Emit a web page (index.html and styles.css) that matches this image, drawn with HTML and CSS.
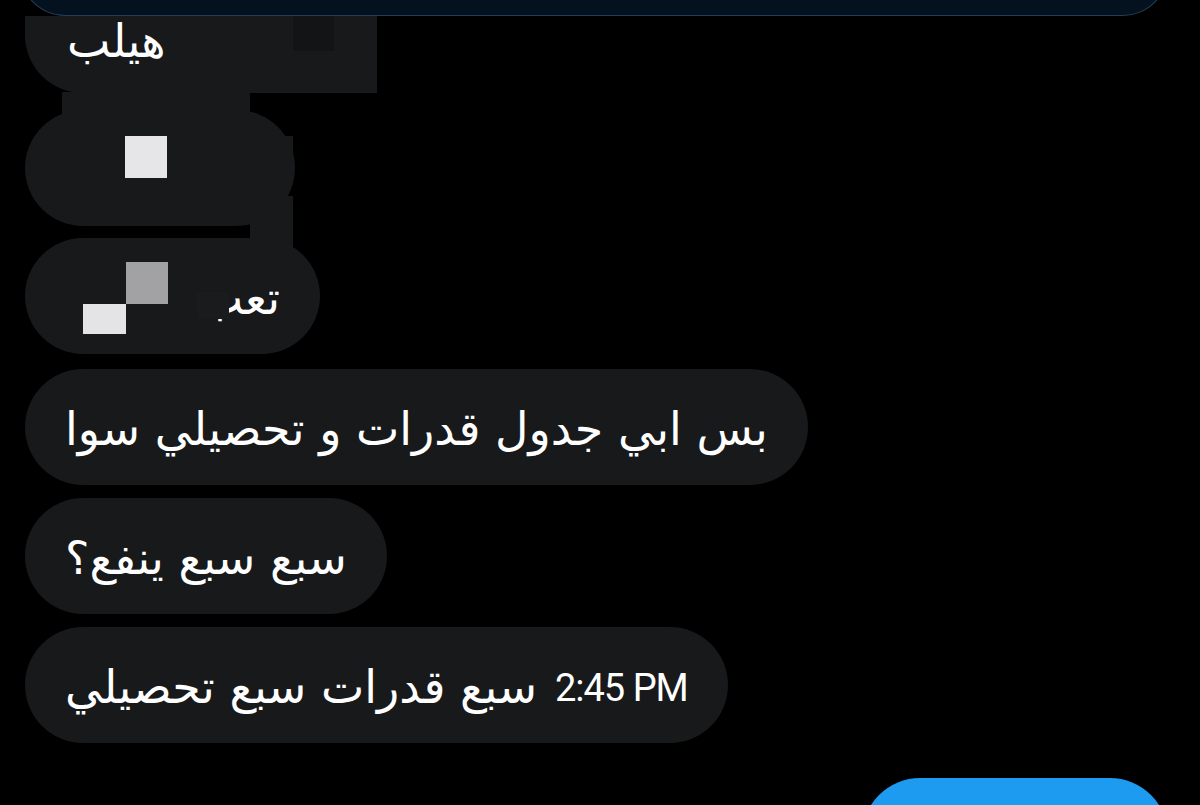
FILE: index.html
```html
<!DOCTYPE html>
<html lang="ar">
  <head>
    <meta charset="utf-8">
    <title>Messages</title>
    <meta name="viewport" content="width=device-width, initial-scale=1.0">
    <link rel="stylesheet" href="styles.css">
  </head>
  <body>
    <main class="thread">
      <div class="card-top"></div>

      <!-- redacted part of the conversation -->
      <div class="redacted">
        <div class="bubble bubble-help"><span class="msg" dir="rtl">هيلب</span></div>
        <div class="bubble bubble-hidden"></div>
        <div class="bubble bubble-tired"><span class="msg" dir="rtl">تعب</span></div>

        <span class="cover cover-dark"></span>
        <span class="cover cover-a"></span>
        <span class="cover cover-b"></span>
        <span class="cover cover-c"></span>
        <span class="cover cover-d"></span>
        <span class="block block-white"></span>
        <span class="block block-grey"></span>
        <span class="block block-light"></span>
      </div>

      <div class="bubble bubble-first"><span class="msg" dir="rtl">بس ابي جدول قدرات و تحصيلي سوا</span></div>
      <div class="bubble"><span class="msg" dir="rtl">سبع سبع ينفع؟</span></div>
      <div class="bubble bubble-last">
        <span class="msg" dir="rtl">سبع قدرات سبع تحصيلي</span>
        <span class="time">2:45 PM</span>
      </div>

      <div class="bubble bubble-sent"></div>
    </main>
  </body>
</html>
```

FILE: styles.css
```css
:root {
  --bg: #000000;
  --bubble: #18191b;
  --bubble-dark: #131416;
  --card: #04121f;
  --card-edge: #243d55;
  --sent: #1d9bf0;
  --text: #ffffff;
}

html, body {
  margin: 0;
  height: 100%;
  overflow: hidden;
}

body {
  background-color: var(--bg);
  color: var(--text);
  font-family: "DejaVu Sans", sans-serif;
}

.thread {
  display: flex;
  flex-direction: column;
  align-items: flex-start;
  gap: 13px;
  padding: 0 32px 0 25px;
}

/* the sent card cut off at the top */
.card-top {
  align-self: stretch;
  height: 60px;
  margin: -45px 0 0 -5px;
  background-color: var(--card);
  border: 1px solid var(--card-edge);
  border-top: none;
  border-radius: 0 0 45px 45px;
  position: relative;
  z-index: 1;
}

.bubble {
  display: flex;
  align-items: center;
  box-sizing: border-box;
  height: 116px;
  padding: 0 40px;
  border-radius: 58px;
  background-color: var(--bubble);
  font-size: 46px;
  line-height: 1;
  white-space: nowrap;
}

.msg {
  padding-top: 4px;
}

/* redacted group */
.redacted {
  position: relative;
  display: flex;
  flex-direction: column;
  align-items: flex-start;
  margin-top: -13px;
}

.bubble-help {
  width: 352px;
  height: 77px;
  padding-left: 42px;
  align-items: flex-start;
  border-radius: 0 0 0 58px;
}

.bubble-help .msg {
  padding-top: 2px;
}

.bubble-hidden {
  width: 270px;
  margin-top: 17px;
}

.bubble-tired {
  width: 295px;
  margin-top: 12px;
  justify-content: flex-end;
}

.bubble-first {
  margin-top: 2px;
}

.cover,
.block {
  position: absolute;
}

.cover {
  background-color: var(--bubble);
}

.cover-dark {
  left: 268px;
  top: -2px;
  width: 41px;
  height: 37px;
  background-color: var(--bubble-dark);
}

.cover-a {
  left: 37px;
  top: 76px;
  width: 188px;
  height: 44px;
}

.cover-b {
  left: 225px;
  top: 120px;
  width: 43px;
  height: 36px;
}

.cover-c {
  left: 225px;
  top: 180px;
  width: 43px;
  height: 67px;
}

.cover-d {
  left: 172px;
  top: 276px;
  width: 32px;
  height: 27px;
  background-color: #1a1b1d;
}

.block-white {
  left: 100px;
  top: 120px;
  width: 42px;
  height: 42px;
  background-color: #e6e6e8;
}

.block-grey {
  left: 101px;
  top: 246px;
  width: 42px;
  height: 42px;
  background-color: #a2a2a4;
}

.block-light {
  left: 58px;
  top: 288px;
  width: 43px;
  height: 30px;
  background-color: #e4e4e6;
}

.bubble-last {
  gap: 18px;
}

.time {
  font-family: Roboto, "Liberation Sans", sans-serif;
  font-size: 38px;
  letter-spacing: -1px;
  padding-top: 6px;
}

.bubble-sent {
  align-self: flex-end;
  width: 306px;
  margin-top: 22px;
  background-color: var(--sent);
}
```
